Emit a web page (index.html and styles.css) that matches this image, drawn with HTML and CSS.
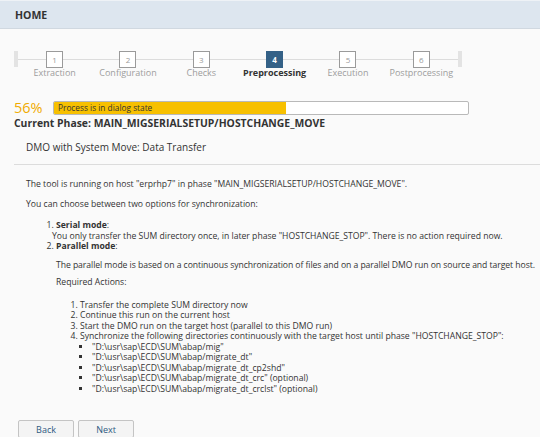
FILE: index.html
```html
<!DOCTYPE html>
<html>
<head>
<meta charset="utf-8">
<link rel="stylesheet" href="styles.css">
</head>
<body>
<header class="topbar"><span class="home">HOME</span></header>
<main class="page">
  <div class="stepper">
    <div class="cap"></div>
    <div class="step"><div class="num">1</div><div class="lbl">Extraction</div></div>
    <div class="step"><div class="num">2</div><div class="lbl">Configuration</div></div>
    <div class="step"><div class="num">3</div><div class="lbl">Checks</div></div>
    <div class="step active"><div class="num">4</div><div class="lbl">Preprocessing</div></div>
    <div class="step"><div class="num">5</div><div class="lbl">Execution</div></div>
    <div class="step"><div class="num">6</div><div class="lbl">Postprocessing</div></div>
    <div class="cap"></div>
  </div>
  <div class="progress-row">
    <span class="pct">56%</span>
    <div class="bar"><div class="fill" style="width:56%"></div><span class="bar-text">Process is in dialog state</span></div>
  </div>
  <div class="phase">Current Phase: MAIN_MIGSERIALSETUP/HOSTCHANGE_MOVE</div>
  <div class="dlg-title">DMO with System Move: Data Transfer</div>
  <div class="divider"></div>
  <div class="content">
    <p class="first">The tool is running on host "erprhp7" in phase "MAIN_MIGSERIALSETUP/HOSTCHANGE_MOVE".</p>
    <p class="choose">You can choose between two options for synchronization:</p>
    <ol class="modes">
      <li><b>Serial mode</b>:<span class="sub">You only transfer the SUM directory once, in later phase "HOSTCHANGE_STOP". There is no action required now.</span></li>
      <li><b>Parallel mode</b>:
        <p class="sub nowrap">The parallel mode is based on a continuous synchronization of files and on a parallel DMO run on source and target host.</p>
        <p class="sub req">Required Actions:</p>
        <ol class="actions">
          <li>Transfer the complete SUM directory now</li>
          <li>Continue this run on the current host</li>
          <li>Start the DMO run on the target host (parallel to this DMO run)</li>
          <li>Synchronize the following directories continuously with the target host until phase "HOSTCHANGE_STOP":
            <ul class="dirs">
              <li>"D:\usr\sap\ECD\SUM\abap/mig"</li>
              <li>"D:\usr\sap\ECD\SUM\abap/migrate_dt"</li>
              <li>"D:\usr\sap\ECD\SUM\abap/migrate_dt_cp2shd"</li>
              <li>"D:\usr\sap\ECD\SUM\abap/migrate_dt_crc" (optional)</li>
              <li>"D:\usr\sap\ECD\SUM\abap/migrate_dt_crclst" (optional)</li>
            </ul>
          </li>
        </ol>
      </li>
    </ol>
  </div>
  <div class="buttons">
    <button class="btn">Back</button>
    <button class="btn">Next</button>
  </div>
</main>
</body>
</html>
```
FILE: styles.css
```css
html, body { margin: 0; padding: 0; }
body {
  background: #fafafa;
  font-family: "Open Sans", "Liberation Sans", sans-serif;
  color: #333;
  width: 540px;
  height: 437px;
  overflow: hidden;
}
.topbar {
  height: 27px;
  background: #dde6ef;
  border-top: 1px solid #eef2f6;
  border-bottom: 1px solid #d0d8e0;
  display: flex;
  align-items: center;
  padding-left: 15px;
}
.home { font-size: 10.5px; font-weight: 700; color: #333; }
.page { padding: 0 0 0 14px; }
.stepper {
  margin-top: 22px;
  width: 448px;
  display: flex;
  position: relative;
  height: 31px;
}
.stepper::before {
  content: "";
  position: absolute;
  left: 0; right: 0; top: 8px;
  height: 1px;
  background: #dcdcdc;
}
.cap { width: 4px; height: 16px; background: #e3e3e3; position: relative; }
.step {
  flex: 1;
  display: flex;
  flex-direction: column;
  align-items: center;
  position: relative;
}
.num {
  width: 15px; height: 15px;
  border: 1px solid #9a9a9a;
  background: #fff;
  color: #999;
  font-size: 8px;
  display: flex; align-items: center; justify-content: center;
}
.lbl { font-size: 9px; color: #9d9d9d; margin-top: -1px; line-height: 11px; }
.step.active .num { background: #346187; border-color: #346187; color: #fff; font-weight: 700; }
.step.active .lbl { color: #333; font-weight: 700; }
.progress-row {
  margin-top: 18px;
  display: flex;
  align-items: center;
  height: 15px;
}
.pct { color: #f0ab00; font-size: 14.5px; width: 39px; line-height: 15px; }
.bar {
  position: relative;
  width: 414px; height: 12px;
  border: 1px solid #b9b9b9;
  border-radius: 2px;
  background: #fff;
  overflow: hidden;
}
.fill { height: 100%; background: #f7c000; }
.bar-text {
  position: absolute; left: 4px; top: 0;
  font-size: 8.3px; line-height: 12px; color: #333;
}
.phase { font-size: 10.4px; font-weight: 700; margin-top: 1px; line-height: 14px; }
.dlg-title { font-size: 10px; margin: 10px 0 0 12px; line-height: 14px; }
.divider { height: 1px; background: #dcdcdc; margin-top: 10px; }
.content { font-size: 8.65px; padding-left: 12px; line-height: 10.5px; }
.content p { margin: 0; }
.content p.first { margin-top: 14px; }
.content p.choose { margin-top: 9px; }
.nowrap { white-space: nowrap; letter-spacing: -0.06px; }
.modes { margin: 11px 0 0 0; padding-left: 30px; }
.modes > li { margin: 0; }
.sub { display: block; margin-left: -4px; }
.modes p.sub { margin-top: 8px; }
.modes p.req { margin-top: 7px; }
.actions { margin: 12px 0 0 -4px; padding-left: 28px; }
.dirs { margin: 0; padding-left: 12px; list-style: square; }
.buttons { display: flex; gap: 4px; margin: 26px 0 0 4px; }
.btn {
  width: 56px; height: 18px;
  background: #f4f4f4;
  border: 1px solid #c4c4c4;
  border-radius: 2px;
  font-family: "Open Sans", "Liberation Sans", sans-serif;
  font-size: 9px;
  color: #2f5a82;
  padding: 0;
}
```
